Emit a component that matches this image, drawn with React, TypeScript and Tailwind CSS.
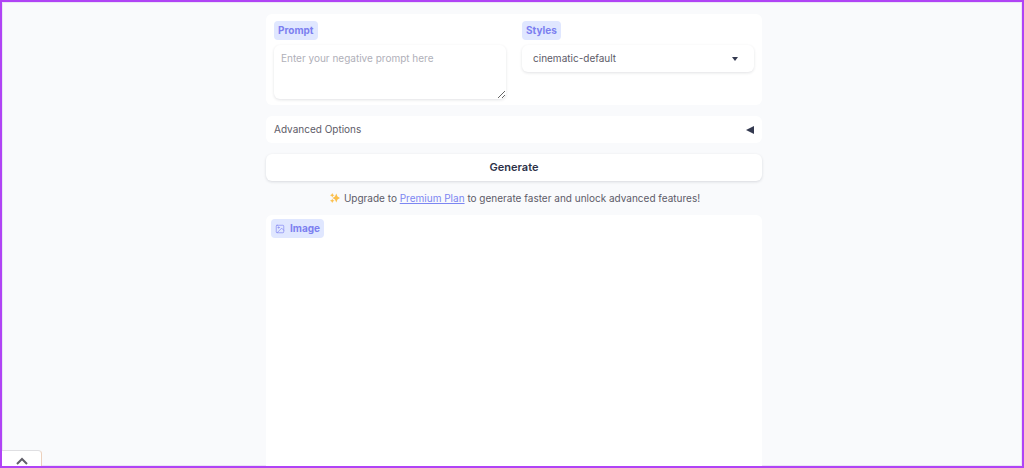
import type { ReactNode } from 'react';

type FieldLabelProps = {
  htmlFor: string;
  children: ReactNode;
};

function FieldLabel({ htmlFor, children }: FieldLabelProps) {
  return (
    <label
      htmlFor={htmlFor}
      className="w-fit rounded bg-[#e0e7ff] px-1 text-[10px] leading-[19px] font-bold text-[#7c7ff0]"
    >
      {children}
    </label>
  );
}

function SparklesIcon() {
  return (
    <svg viewBox="0 0 20 20" className="h-[10px] w-[10px] shrink-0" fill="#fbbf4b" aria-hidden="true">
      <path d="M12.5 1 15 7 20 10 15 13 12.5 19 10 13 5 10 10 7Z" />
      <path d="M4.5 0 5.9 3 9 4.5 5.9 6 4.5 9 3.1 6 0 4.5 3.1 3Z" />
      <path d="M4.5 11.5 5.9 14.2 9 15.7 5.9 17.2 4.5 20 3.1 17.2 0 15.7 3.1 14.2Z" />
    </svg>
  );
}

function ImageIcon() {
  return (
    <svg
      viewBox="0 0 24 24"
      className="h-[10px] w-[10px]"
      fill="none"
      stroke="currentColor"
      strokeWidth="1.5"
      strokeLinecap="round"
      strokeLinejoin="round"
      aria-hidden="true"
    >
      <rect x="3" y="3" width="18" height="18" rx="2" />
      <circle cx="8.5" cy="8.5" r="1.5" />
      <path d="m21 15-5-5L5 21" />
    </svg>
  );
}

export default function App() {
  return (
    <div className="relative flex min-h-screen flex-col border-2 border-[#b043f5] bg-[#f9fafc] pt-3 pr-4 pl-5 font-[Inter,sans-serif] text-[10px] text-[#5d5b68] shadow-[inset_0_0_0_1px_#ebe5f6]">
      <main className="mx-auto flex w-full max-w-[496px] flex-1 flex-col">
        {/* Prompt and style */}
        <section className="grid grid-cols-2 gap-4 rounded-md bg-white px-2 pt-[7px] pb-1.5">
          <div className="flex flex-col gap-[5px]">
            <FieldLabel htmlFor="prompt">Prompt</FieldLabel>
            <textarea
              id="prompt"
              placeholder="Enter your negative prompt here"
              className="block h-[54px] w-full resize rounded-md bg-white px-[7px] py-[5px] text-[10px] leading-4 shadow-[0_1px_3px_rgba(15,23,42,0.12)] outline-none placeholder:text-[#b0b0b9]"
            />
          </div>
          <div className="flex flex-col gap-[5px]">
            <FieldLabel htmlFor="styles">Styles</FieldLabel>
            <div className="relative">
              <select
                id="styles"
                className="h-[27px] w-full appearance-none rounded-md bg-white px-[11px] text-[10px] shadow-[0_1px_3px_rgba(15,23,42,0.12)] outline-none"
              >
                <option>cinematic-default</option>
              </select>
              <svg
                viewBox="0 0 6 4"
                className="pointer-events-none absolute inset-y-0 right-4 my-auto h-1 w-1.5"
                fill="#343a50"
                aria-hidden="true"
              >
                <path d="M0 0h6L3 4Z" />
              </svg>
            </div>
          </div>
        </section>

        <button
          type="button"
          aria-expanded="false"
          className="mt-[11px] flex h-[27px] items-center justify-between rounded-md bg-white px-2"
        >
          <span>Advanced Options</span>
          <svg viewBox="0 0 8 8" className="h-2 w-2" fill="#343a50" aria-hidden="true">
            <path d="M8 0v8L0 4Z" />
          </svg>
        </button>

        <button
          type="button"
          className="mt-[11px] h-[27px] rounded-md bg-white text-[11px] font-semibold text-[#2c3147] shadow-[0_1px_3px_rgba(15,23,42,0.14)]"
        >
          Generate
        </button>

        <p className="flex h-[34px] items-center justify-center gap-1 pl-0.5">
          <SparklesIcon />
          <span>
            Upgrade to{' '}
            <a href="#premium" className="text-[#7c86f2] underline">
              Premium Plan
            </a>{' '}
            to generate faster and unlock advanced features!
          </span>
        </p>

        {/* Generated image */}
        <section className="flex-1 rounded-t-md bg-white px-[5px] pt-1">
          <h2 className="flex h-[19px] w-fit items-center gap-[5px] rounded bg-[#e0e7ff] px-1 font-bold text-[#7c7ff0]">
            <ImageIcon />
            Image
          </h2>
        </section>
      </main>

      <button
        type="button"
        aria-label="Expand panel"
        className="absolute bottom-0 left-0 flex h-4 w-10 items-center justify-center rounded-tr border-t border-r border-t-[#dfdfe2] border-r-[#ecd0bc] bg-white pt-1"
      >
        <svg viewBox="0 0 12 8" className="h-2 w-3" fill="none" stroke="#62606a" strokeWidth="2" aria-hidden="true">
          <path d="m1 7 5-5 5 5" />
        </svg>
      </button>
    </div>
  );
}
